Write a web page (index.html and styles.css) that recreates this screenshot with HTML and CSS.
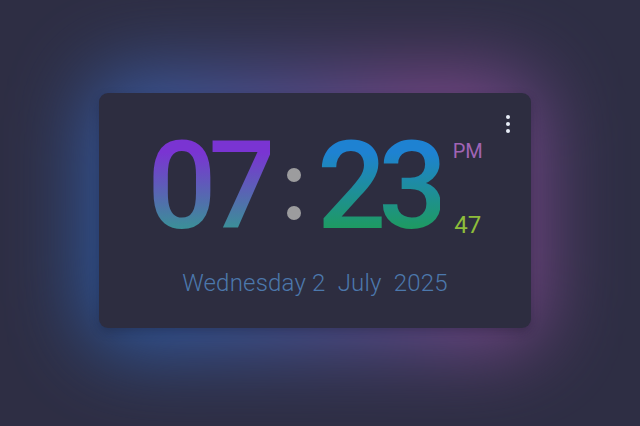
FILE: index.html
```html
<!DOCTYPE html>
<html>
<head>
<meta charset="utf-8">
<link rel="stylesheet" href="styles.css">
</head>
<body>
<div class="stage">
  <div class="card">
    <button class="menu" aria-label="menu"><span></span><span></span><span></span></button>
    <div class="clock">
      <span class="hours">07</span>
      <span class="colon"><i></i><i></i></span>
      <span class="minutes">23</span>
      <div class="side">
        <span class="ampm">PM</span>
        <span class="secs">47</span>
      </div>
    </div>
    <div class="date">Wednesday 2&nbsp; July&nbsp; 2025</div>
  </div>
</div>
</body>
</html>
```
FILE: styles.css
```css
html {
  background: #2e2e44;
}
body {
  margin: 0;
  height: 100%;
  overflow: hidden;
}
.stage {
  height: 426px;
  display: flex;
  align-items: center;
  justify-content: center;
  padding-right: 10px;
  padding-bottom: 5px;
  box-sizing: border-box;
  isolation: isolate;
}
.card {
  position: relative;
  width: 432px;
  height: 235px;
  background: #2d2d40;
  border-radius: 9px;
  display: flex;
  flex-direction: column;
  align-items: center;
  box-sizing: border-box;
  padding-top: 40px;
  font-family: Roboto, "Liberation Sans", sans-serif;
  box-shadow: 0 4px 10px rgba(20, 20, 35, 0.3);
}
.card::before {
  content: "";
  position: absolute;
  inset: -22px -12px;
  z-index: -1;
  background: linear-gradient(70deg, #2660b0 0%, #3d5aa0 30%, #5a4f92 55%, #80488c 78%, #6c4a8c 100%);
  filter: blur(40px);
  border-radius: 40px;
  opacity: 0.95;
}
.menu {
  position: absolute;
  top: 22px;
  right: 20px;
  width: 6px;
  padding: 0;
  border: 0;
  background: none;
  display: flex;
  flex-direction: column;
  gap: 3px;
  align-items: center;
}
.menu span {
  width: 4px;
  height: 4px;
  border-radius: 50%;
  background: #e8eef8;
}
.clock {
  display: flex;
  align-items: flex-start;
  margin-left: 0;
}
.hours, .minutes {
  font-size: 122px;
  font-weight: 500;
  line-height: 108px;
  letter-spacing: -8px;
  -webkit-background-clip: text;
  background-clip: text;
  color: transparent;
}
.hours {
  background-image: linear-gradient(180deg, #7a34d2 18%, #3b8f98 88%);
}
.minutes {
  background-image: linear-gradient(180deg, #1e82d2 18%, #1e9a62 88%);
}
.colon {
  display: flex;
  flex-direction: column;
  gap: 24px;
  margin: 35px 16px 0 17px;
}
.colon i {
  width: 14px;
  height: 14px;
  border-radius: 50%;
  background: #9c9c9e;
}
.side {
  display: flex;
  flex-direction: column;
  justify-content: space-between;
  align-items: center;
  height: 104px;
  margin-left: 13px;
}
.ampm {
  font-size: 20px;
  color: #a064b4;
  line-height: 24px;
  margin-top: 6px;
}
.secs {
  font-size: 24px;
  color: #8dbd3a;
  line-height: 24px;
}
.date {
  margin-top: 28px;
  font-size: 24px;
  font-weight: 300;
  color: #4c78ac;
  letter-spacing: 0.2px;
}
```
